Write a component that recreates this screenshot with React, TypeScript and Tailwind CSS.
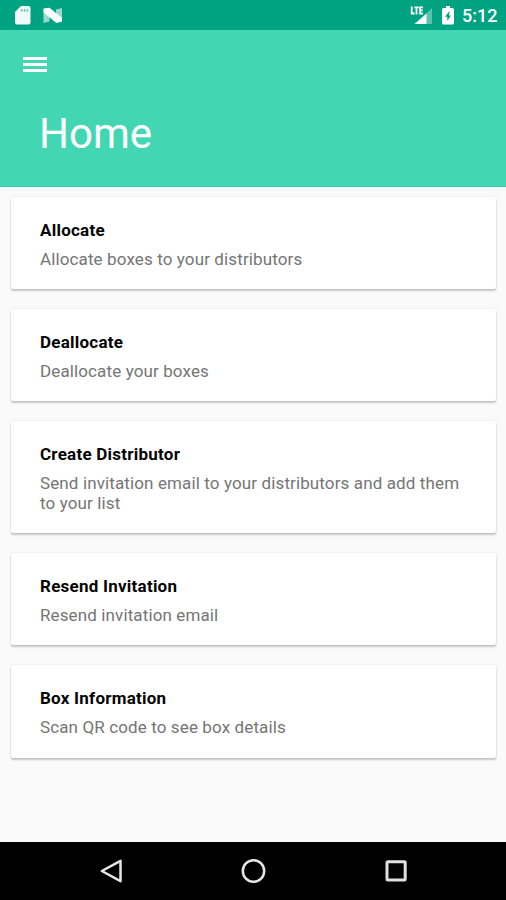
type Item = { title: string; text: string };

const items: Item[] = [
  { title: 'Allocate', text: 'Allocate boxes to your distributors' },
  { title: 'Deallocate', text: 'Deallocate your boxes' },
  { title: 'Create Distributor', text: 'Send invitation email to your distributors and add them to your list' },
  { title: 'Resend Invitation', text: 'Resend invitation email' },
  { title: 'Box Information', text: 'Scan QR code to see box details' },
];

function StatusBar() {
  return (
    <div className="flex h-[30px] shrink-0 items-center justify-between bg-[#00a381] pl-[15px] pr-[9px] text-white">
      <div className="flex items-center gap-[12px]">
        <svg width="16" height="20" viewBox="0 0 16 20">
          <path fill="#fff" fillOpacity=".95" d="M6 1h7.500a2 2 0 0 1 2 2v14.500a2 2 0 0 1-2 2H2a2 2 0 0 1-2-2V7Z" />
          <path fill="#00a381" fillOpacity=".55" d="M6 4h1.600v2.800H6ZM8.800 4h1.600v2.800H8.800ZM11.600 4h1.600v2.800h-1.600Z" />
        </svg>
        <svg width="20" height="20" viewBox="0 0 20 20">
          <path fill="#fff" fillOpacity=".6" d="M.5 4 6.500 8v8.500L.5 18ZM13 4.500l6-1.500v14l-6-3Z" />
          <path fill="#fff" d="M.5 3.500 6.500 2.800 19 13v3.500L13.500 18 .5 7.500Z" />
        </svg>
      </div>
      <div className="flex items-center">
        <svg width="24" height="20" viewBox="0 0 24 20">
          <path fill="#fff" fillOpacity=".35" d="M22 3v16H15V10Z" />
          <path fill="#fff" d="M16.500 8.500V19H4.500Z" />
          <path fill="none" stroke="#fff" strokeWidth="1.800" d="M1.700 1.500v7h2.800M4.300 2.400h4.400M6.500 2.400v7M13 2.400h-2.900v6.100H13M10.100 5.400h2.600" />
        </svg>
        <svg className="ml-[8px]" width="12" height="20" viewBox="0 0 12 20">
          <path fill="#fff" fillRule="evenodd" d="M4 1h4v2h2.500a1.500 1.500 0 0 1 1.500 1.500V18a1.500 1.500 0 0 1-1.500 1.500h-9A1.500 1.500 0 0 1 0 18V4.500A1.500 1.500 0 0 1 1.500 3H4ZM7.500 6 3 11.800h2.300v4.200L9 10.500H7Z" />
        </svg>
        <span className="ml-[8px] w-[35px] whitespace-nowrap pt-[1px] text-[18px] font-medium leading-[30px]">5:12</span>
      </div>
    </div>
  );
}

function Card({ title, text }: Item) {
  return (
    <section className="rounded-[2px] bg-white px-[29px] pb-[20px] pt-[23px] shadow-[0_2px_2px_rgba(0,0,0,0.2),0_0_2px_rgba(0,0,0,0.12)]">
      <h2 className="text-[17px] font-bold leading-[20px] tracking-[0.240px] text-[#050505]">{title}</h2>
      <p className="mt-[9px] text-[17px] leading-[20.100px] tracking-[0.120px] text-[#757575]">{text}</p>
    </section>
  );
}

function NavBar() {
  return (
    <nav className="flex h-[58px] shrink-0 items-center justify-between bg-black pl-[99px] pr-[98px]">
      <svg width="24" height="26" viewBox="0 0 24 26">
        <path d="M21.500 2.800v20.400L2.800 13Z" fill="none" stroke="#e6e6e6" strokeWidth="2.500" strokeLinejoin="round" />
      </svg>
      <svg width="26" height="26" viewBox="0 0 26 26">
        <circle cx="12.500" cy="13" r="10.700" fill="none" stroke="#e6e6e6" strokeWidth="2.500" />
      </svg>
      <svg width="24" height="24" viewBox="0 0 24 24">
        <rect x="3" y="2.800" width="18.200" height="18.200" rx="1" fill="none" stroke="#e0e0e0" strokeWidth="3" />
      </svg>
    </nav>
  );
}

export default function App() {
  return (
    <div className="flex h-[900px] w-[506px] flex-col overflow-hidden bg-[#fafafa] font-[Roboto,sans-serif]">
      <StatusBar />
      <header className="h-[157px] shrink-0 border-b border-[#2bcba4] bg-[#42d6b2] pt-[27px] text-white">
        <button className="ml-[23px] flex w-[24px] flex-col gap-[3px]" aria-label="Menu">
          <span className="h-[3px] w-full bg-white" />
          <span className="h-[3px] w-full bg-white" />
          <span className="h-[3px] w-full bg-white" />
        </button>
        <h1 className="ml-[39px] mt-[37px] text-[42px] font-normal leading-[50px]">Home</h1>
      </header>
      <main className="flex flex-1 flex-col gap-[20px] pl-[11px] pr-[10px] pt-[10px]">
        {items.map((item) => (
          <Card key={item.title} {...item} />
        ))}
      </main>
      <NavBar />
    </div>
  );
}
